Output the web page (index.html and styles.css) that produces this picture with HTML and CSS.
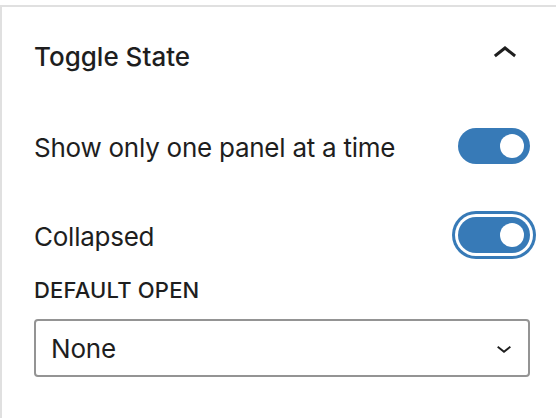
FILE: index.html
```html
<!DOCTYPE html>
<html>
<head>
<meta charset="utf-8">
<link rel="stylesheet" href="styles.css">
</head>
<body>
<div class="panel">
  <div class="panel-title">
    <span class="title-text">Toggle State</span>
    <svg class="chev-up" viewBox="0 0 24 24" width="48" height="48"><path d="M6.5 12.4L12 8l5.5 4.4-.9 1.2L12 10l-4.6 3.6-1-1.2z"/></svg>
  </div>
  <div class="toggle-row first">
    <span class="label">Show only one panel at a time</span>
    <span class="toggle"><span class="thumb"></span></span>
  </div>
  <div class="toggle-row second">
    <span class="label">Collapsed</span>
    <span class="toggle focused"><span class="thumb"></span></span>
  </div>
  <div class="field-label">Default open</div>
  <div class="select">
    <span class="select-value">None</span>
    <svg class="chev-down" viewBox="0 0 24 24" width="30" height="30"><path d="M17.5 11.6L12 16l-5.5-4.4.9-1.2L12 14l4.6-3.6 1 1.2z"/></svg>
  </div>
</div>
</body>
</html>
```
FILE: styles.css
```css
html, body {
  margin: 0;
  padding: 0;
  background: #fff;
}
body {
  font-family: Inter, "Noto Sans", sans-serif;
  color: #1e1e1e;
  height: 418px;
  overflow: hidden;
  padding-top: 5px;
}
.panel {
  border-top: 2px solid #e0e0e0;
  border-left: 2px solid #e0e0e0;
  height: 420px;
  padding: 0 26px 0 32px;
  box-sizing: border-box;
}
.panel-title {
  height: 100px;
  display: flex;
  align-items: center;
  justify-content: space-between;
}
.title-text {
  font-size: 26px;
  font-weight: 500;
  line-height: 26px;
}
.chev-up {
  fill: #1e1e1e;
  margin-top: -6px;
  margin-right: 1px;
}
.toggle-row {
  display: flex;
  align-items: center;
  justify-content: space-between;
  height: 36px;
}
.toggle-row.first { margin-top: 21px; }
.toggle-row.second { margin-top: 53px; }
.label {
  font-size: 26px;
  line-height: 36px;
  letter-spacing: -0.25px;
  padding-top: 4px;
}
.toggle {
  width: 72px;
  height: 36px;
  border-radius: 18px;
  background: #377ab7;
  position: relative;
  flex: none;
}
.toggle.focused {
  box-shadow: 0 0 0 3px #fff, 0 0 0 6px #377ab7;
}
.thumb {
  position: absolute;
  width: 24px;
  height: 24px;
  border-radius: 50%;
  background: #fff;
  top: 6px;
  left: 42px;
}
.field-label {
  margin-top: 26px;
  font-size: 22px;
  line-height: 22px;
  font-weight: 500;
  text-transform: uppercase;
  letter-spacing: 0.2px;
}
.select {
  margin-top: 18px;
  height: 58px;
  box-sizing: border-box;
  border: 2px solid #949494;
  border-radius: 4px;
  display: flex;
  align-items: center;
  justify-content: space-between;
  padding: 0 9px 0 15px;
}
.select-value {
  font-size: 26px;
  letter-spacing: -0.2px;
}
.chev-down {
  fill: #1e1e1e;
}
```
